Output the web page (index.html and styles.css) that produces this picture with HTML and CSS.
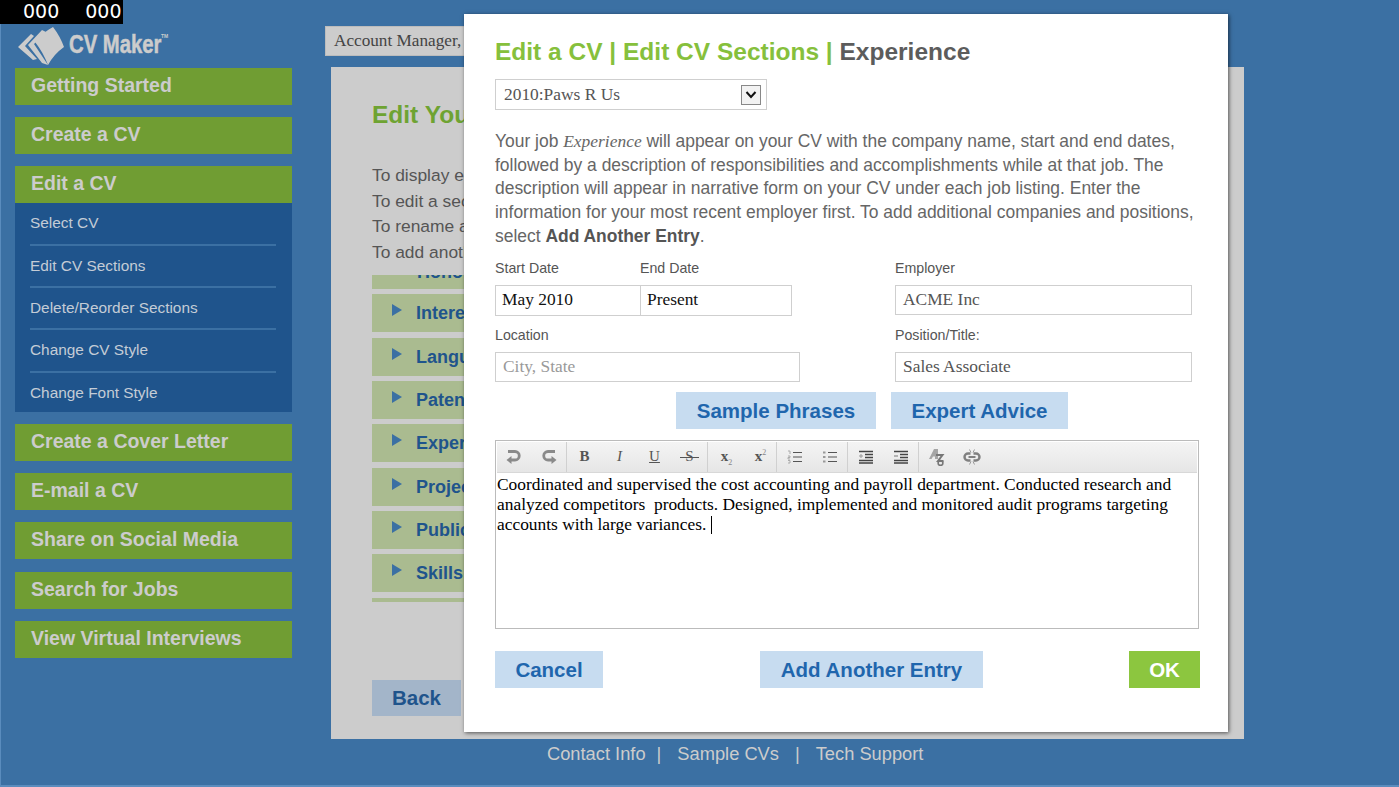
FILE: index.html
```html
<!DOCTYPE html>
<html lang="en">
<head>
  <meta charset="UTF-8">
  <title>CV Maker - Edit a CV</title>
  <link rel="stylesheet" href="styles.css">
</head>
<body>
  <div class="timer"><span>000</span><span>000</span></div>

  <div class="page">
    <div class="sidebar">
      <div class="logo">
        <svg class="logo-mark" width="52" height="40" viewBox="0 0 52 40">
          <path d="M14 8 L1 21 L16 34 L20 33 L8 20 L17 10 Z" fill="#cccccc"/>
          <path d="M25 4 L11 19 L25 37 L31 39 L17 18 L29 6 Z" fill="#cccccc"/>
          <path d="M36 1 Q25 7 18 16 Q26 26 31 39 Q37 28 47 21 Q43 10 36 1 Z" fill="#cccccc"/>
        </svg>
        <span class="logo-text">CV Maker</span>
        <span class="logo-tm">TM</span>
      </div>
      <a class="nav-item">Getting Started</a>
      <a class="nav-item">Create a CV</a>
      <div class="nav-group">
        <a class="nav-item">Edit a CV</a>
        <div class="subnav">
          <a class="subnav-item">Select CV</a>
          <a class="subnav-item">Edit CV Sections</a>
          <a class="subnav-item">Delete/Reorder Sections</a>
          <a class="subnav-item">Change CV Style</a>
          <a class="subnav-item">Change Font Style</a>
        </div>
      </div>
      <a class="nav-item">Create a Cover Letter</a>
      <a class="nav-item">E-mail a CV</a>
      <a class="nav-item">Share on Social Media</a>
      <a class="nav-item">Search for Jobs</a>
      <a class="nav-item">View Virtual Interviews</a>
    </div>

    <div class="main">
      <div class="account-tab">Account Manager, Sign Out</div>
      <div class="panel">
        <h1>Edit Your CV Sections</h1>
        <div class="intro">
          <p>To display each section, select the arrow.</p>
          <p>To edit a section, select its title.</p>
          <p>To rename a section, select Rename.</p>
          <p>To add another section, select Add.</p>
        </div>
        <div class="section-list">
          <div class="section-scroll">
            <div class="section-row section-row-partial">Honors</div>
            <div class="section-row"><span class="arrow"></span>Interests</div>
            <div class="section-row"><span class="arrow"></span>Languages</div>
            <div class="section-row"><span class="arrow"></span>Patents</div>
            <div class="section-row"><span class="arrow"></span>Experience</div>
            <div class="section-row"><span class="arrow"></span>Projects</div>
            <div class="section-row"><span class="arrow"></span>Publications</div>
            <div class="section-row"><span class="arrow"></span>Skills</div>
            <div class="section-row"></div>
          </div>
        </div>
        <a class="back-btn">Back</a>
      </div>
      <div class="footer">
        <a>Contact Info</a><span class="sep">|</span><a>Sample CVs</a><span class="sep sep-wide">|</span><a>Tech Support</a>
      </div>
    </div>
  </div>

  <div class="modal">
    <h2><span class="crumb">Edit a CV | Edit CV Sections | </span>Experience</h2>

    <div class="entry-select">
      <span>2010:Paws R Us</span>
      <span class="select-arrow">
        <svg width="12" height="8" viewBox="0 0 12 8"><path d="M1.5 1 L6 6 L10.5 1" fill="none" stroke="#111" stroke-width="2"/></svg>
      </span>
    </div>

    <p class="help">
      Your job <em>Experience</em> will appear on your CV with the company name, start and end dates,<br>
      followed by a description of responsibilities and accomplishments while at that job. The<br>
      description will appear in narrative form on your CV under each job listing. Enter the<br>
      information for your most recent employer first. To add additional companies and positions,<br>
      select <b>Add Another Entry</b>.
    </p>

    <div class="fields">
      <div class="field-left">
        <div class="date-labels"><label>Start Date</label><label>End Date</label></div>
        <div class="date-box">
          <div class="date-start">May 2010</div>
          <div class="date-end">Present</div>
        </div>
      </div>
      <div class="field-right">
        <label>Employer</label>
        <div class="text-box">ACME Inc</div>
      </div>
      <div class="field-left">
        <label>Location</label>
        <div class="text-box text-box-location placeholder">City, State</div>
      </div>
      <div class="field-right">
        <label>Position/Title:</label>
        <div class="text-box">Sales Associate</div>
      </div>
    </div>

    <div class="helper-btns">
      <a class="btn btn-phrases">Sample Phrases</a>
      <a class="btn btn-advice">Expert Advice</a>
    </div>

    <div class="editor">
      <div class="toolbar">
        <div class="tool-group">
          <span class="tool tool-hist"><svg width="18" height="16" viewBox="0 0 18 16"><path d="M3 2.5 H10 A4.2 4.2 0 0 1 10 11 H5" fill="none" stroke="#8a8a8a" stroke-width="2.8"/><path d="M6.5 7 L1.5 11 L6.5 15 Z" fill="#8a8a8a"/></svg></span>
          <span class="tool tool-hist"><svg width="18" height="16" viewBox="0 0 18 16"><path d="M15 2.5 H8 A4.2 4.2 0 0 0 8 11 H13" fill="none" stroke="#8a8a8a" stroke-width="2.8"/><path d="M11.5 7 L16.5 11 L11.5 15 Z" fill="#8a8a8a"/></svg></span>
        </div>
        <div class="tool-group">
          <span class="tool tool-b">B</span>
          <span class="tool tool-i">I</span>
          <span class="tool tool-u">U</span>
          <span class="tool"><span class="tool-s">S</span></span>
        </div>
        <div class="tool-group">
          <span class="tool tool-x"><span>x<sub>2</sub></span></span>
          <span class="tool tool-x"><span>x<sup>2</sup></span></span>
        </div>
        <div class="tool-group">
          <span class="tool"><svg width="16" height="14" viewBox="0 0 16 14"><path d="M6 2.5 H15 M6 7 H15 M6 11.5 H15" stroke="#555" stroke-width="1.2"/><path d="M1 1 H3 V4 M1 6 H3 V7.5 H1 V9 H3 M1 10.5 H3 V13 H1" fill="none" stroke="#aaa"/></svg></span>
          <span class="tool"><svg width="16" height="14" viewBox="0 0 16 14"><path d="M6 2.5 H15 M6 7 H15 M6 11.5 H15" stroke="#555" stroke-width="1.2"/><path d="M1 1.5 H3.5 V3.5 H1 Z M1 6 H3.5 V8 H1 Z M1 10.5 H3.5 V12.5 H1 Z" fill="#999"/></svg></span>
        </div>
        <div class="tool-group">
          <span class="tool"><svg width="16" height="14" viewBox="0 0 16 14"><path d="M1 1.5 H15 M7 4.5 H15 M7 7.5 H15 M1 10.5 H15 M1 13 H15" stroke="#444" stroke-width="1.4"/><path d="M1 6 H5 M3 4 V8" stroke="#999"/></svg></span>
          <span class="tool"><svg width="16" height="14" viewBox="0 0 16 14"><path d="M1 1.5 H15 M7 4.5 H15 M7 7.5 H15 M1 10.5 H15 M1 13 H15" stroke="#444" stroke-width="1.4"/><path d="M1 6 H5" stroke="#999" stroke-width="1.4"/></svg></span>
        </div>
        <div class="tool-group tool-group-last">
          <span class="tool"><svg width="18" height="18" viewBox="0 0 18 18"><path d="M1 11 L6 1 H10 V11 H7 V8.5 H5 L3.5 11 Z" fill="#a5a5a5"/><path d="M8 7 H14.5 L10 13 H15.5" fill="none" stroke="#777" stroke-width="2"/><circle cx="12.5" cy="15" r="2.4" fill="none" stroke="#777" stroke-width="1.6"/></svg></span>
          <span class="tool"><svg width="18" height="16" viewBox="0 0 18 16"><path d="M7.5 4.5 H5 A3.5 3.5 0 0 0 5 11.5 H7.5 M10.5 4.5 H13 A3.5 3.5 0 0 1 13 11.5 H10.5" fill="none" stroke="#808080" stroke-width="2.4"/><path d="M5.5 8 H12.5" stroke="#808080" stroke-width="2"/><path d="M6.5 0.5 L8 3.5 M11.5 0.5 L10 3.5 M6.5 15.5 L8 12.5 M11.5 15.5 L10 12.5" stroke="#999"/></svg></span>
        </div>
      </div>
      <div class="editor-text">Coordinated and supervised the cost accounting and payroll department. Conducted research and analyzed competitors&nbsp; products. Designed, implemented and monitored audit programs targeting accounts with large variances. <span class="caret"></span></div>
    </div>

    <div class="modal-actions">
      <a class="btn btn-cancel">Cancel</a>
      <a class="btn btn-add">Add Another Entry</a>
      <a class="btn btn-ok">OK</a>
    </div>
  </div>
</body>
</html>
```

FILE: styles.css
```css
html, body {
  margin: 0;
  padding: 0;
  height: 787px;
  overflow: hidden;
}

body {
  font-family: "Liberation Sans", Arial, sans-serif;
  background-color: #3b70a3;
  box-shadow: inset 1px -2px 0 #5a8cbd;
  position: relative;
}

p, h1, h2 {
  margin: 0;
}

.timer {
  position: absolute;
  top: 0;
  left: 0;
  width: 123px;
  height: 24px;
  background-color: #000;
  color: #fff;
  font-family: "DejaVu Sans", sans-serif;
  font-size: 19px;
  line-height: 23px;
  box-sizing: border-box;
  padding-left: 23px;
  display: flex;
  gap: 26px;
}

.page {
  display: flex;
}

/* left menu */
.sidebar {
  width: 277px;
  margin-left: 15px;
  padding-top: 26px;
  flex-shrink: 0;
  display: flex;
  flex-direction: column;
  gap: 12.15px;
}

.logo {
  display: flex;
  height: 42px;
  margin-bottom: -12.15px;
  padding-left: 2px;
  position: relative;
}

.logo-mark {
  flex-shrink: 0;
}

.logo-text {
  color: #cccccc;
  font-size: 26px;
  font-weight: bold;
  line-height: 37px;
  -webkit-text-stroke: 0.5px #cccccc;
  transform: scaleX(0.78);
  transform-origin: left center;
  white-space: nowrap;
}

.logo-tm {
  position: absolute;
  left: 146px;
  top: 7px;
  color: #cccccc;
  font-size: 5px;
  font-weight: bold;
}

.nav-item {
  display: block;
  height: 37px;
  line-height: 35px;
  background-color: #709d33;
  color: #cccccc;
  font-size: 19.5px;
  font-weight: bold;
  padding-left: 16px;
}

.subnav {
  background-color: #1f548c;
  height: 208.7px;
  box-sizing: border-box;
  padding: 0 15px 0 16px;
}

.subnav-item {
  display: block;
  height: 42.4px;
  box-sizing: border-box;
  line-height: 40px;
  color: #c4ccd6;
  font-size: 15.4px;
  border-bottom: 2px solid #3b70a3;
  margin-left: -1px;
  margin-right: 1px;
}

.subnav-item:last-child {
  border-bottom: none;
}

/* page behind the dialog */
.main {
  margin-left: 33px;
  padding-top: 26px;
  flex-grow: 1;
}

.account-tab {
  width: 300px;
  height: 30px;
  box-sizing: border-box;
  background-color: #cccccc;
  border: 1px solid #bcbcbc;
  font-family: "Liberation Serif", serif;
  font-size: 17.2px;
  line-height: 28px;
  color: #444;
  padding-left: 8px;
  white-space: nowrap;
}

.panel {
  margin: 11px 155px 0 6px;
  height: 672px;
  box-sizing: border-box;
  background-color: #cccccc;
  padding: 33px 0 0 41px;
  display: flex;
  flex-direction: column;
}

.panel h1 {
  color: #6ea332;
  font-size: 24.5px;
  line-height: 29px;
  white-space: nowrap;
}

.intro {
  margin-top: 34px;
  color: #555;
  font-size: 17.4px;
  line-height: 25.5px;
  white-space: nowrap;
}

.section-list {
  margin-top: 10px;
  width: 800px;
  height: 327px;
  overflow: hidden;
}

.section-scroll {
  margin-top: -24px;
}

.section-row {
  height: 38px;
  margin-bottom: 5.35px;
  background-color: #aabb90;
  color: #1f548c;
  font-size: 18px;
  font-weight: bold;
  line-height: 38px;
  padding-left: 20px;
  display: flex;
  white-space: nowrap;
}

.section-row-partial {
  padding-left: 45px;
  line-height: 43px;
}

.arrow {
  width: 0;
  height: 0;
  border-left: 10px solid #3b70a3;
  border-top: 6px solid transparent;
  border-bottom: 6px solid transparent;
  margin: 10px 14px 0 0;
}

.back-btn {
  margin-top: 78px;
  width: 89px;
  height: 36px;
  background-color: #a3b5c9;
  color: #1f548c;
  font-size: 20.5px;
  font-weight: bold;
  line-height: 36px;
  text-align: center;
}

.footer {
  margin-left: 222px;
  padding-top: 4px;
  color: #cccccc;
  font-size: 18.3px;
  line-height: 22px;
  white-space: nowrap;
}

.sep {
  margin: 0 16px 0 11px;
}

.sep-wide {
  margin: 0 16px;
}

/* dialog */
.modal {
  position: absolute;
  left: 464px;
  top: 14px;
  width: 764px;
  height: 718px;
  box-sizing: border-box;
  background-color: #fff;
  box-shadow: 1px 1px 4px rgba(0, 0, 0, 0.6);
  padding: 23px 28px 0 31px;
}

.modal h2 {
  font-size: 24.5px;
  line-height: 29px;
  color: #5c5c5c;
  white-space: nowrap;
}

.crumb {
  color: #86c03c;
}

.entry-select {
  margin-top: 13px;
  width: 272px;
  height: 31px;
  box-sizing: border-box;
  border: 1px solid #cfcfcf;
  display: flex;
  align-items: center;
  justify-content: space-between;
  padding: 0 5px 0 8px;
  font-family: "Liberation Serif", serif;
  font-size: 17.4px;
  color: #555;
}

.select-arrow {
  width: 20px;
  height: 20px;
  box-sizing: border-box;
  border: 1px solid #888;
  background-color: #f2f2f2;
  display: flex;
  align-items: center;
  justify-content: center;
}

.help {
  margin-top: 20px;
  color: #666;
  font-size: 17.45px;
  line-height: 23.7px;
  white-space: nowrap;
}

.help em {
  font-family: "Liberation Serif", serif;
}

.help b {
  color: #555;
}

.fields {
  margin-top: 7px;
  display: grid;
  grid-template-columns: 400px 297px;
  row-gap: 7px;
}

.fields label {
  display: block;
  height: 24px;
  margin-bottom: 5px;
  color: #555;
  font-size: 14.2px;
  line-height: 24px;
}

.date-labels {
  display: flex;
}

.date-labels label {
  width: 145px;
}

.date-box {
  display: flex;
  width: 297px;
  height: 31px;
  box-sizing: border-box;
  border: 1px solid #cfcfcf;
  font-family: "Liberation Serif", serif;
  font-size: 17.4px;
  line-height: 27px;
  color: #111;
}

.date-start {
  width: 145px;
  box-sizing: border-box;
  padding-left: 6px;
  border-right: 1px solid #cfcfcf;
}

.date-end {
  padding-left: 6px;
}

.text-box {
  height: 30px;
  box-sizing: border-box;
  border: 1px solid #cfcfcf;
  padding-left: 7px;
  font-family: "Liberation Serif", serif;
  font-size: 17.4px;
  line-height: 27px;
  color: #555;
}

.text-box-location {
  width: 305px;
}

.placeholder {
  color: #999;
}

.btn {
  display: block;
  height: 37px;
  background-color: #c7dcf0;
  color: #1f66ad;
  font-size: 20.5px;
  font-weight: bold;
  line-height: 37px;
  text-align: center;
}

.helper-btns {
  margin-top: 10px;
  margin-left: 181px;
  display: flex;
  gap: 15px;
}

.btn-phrases {
  width: 200px;
}

.btn-advice {
  width: 177px;
}

.editor {
  margin-top: 11px;
  width: 704px;
  height: 189px;
  box-sizing: border-box;
  border: 1px solid #bbb;
  padding: 1px;
}

.toolbar {
  display: flex;
  height: 31px;
  background: linear-gradient(#f4f4f4, #e6e6e6);
  border-bottom: 1px solid #d8d8d8;
  box-sizing: border-box;
}

.tool-group {
  display: flex;
  border-right: 1px solid #d0d0d0;
}

.tool-group-last {
  border-right: none;
}

.tool {
  width: 35px;
  display: flex;
  align-items: center;
  justify-content: center;
  font-family: "Liberation Serif", serif;
  font-size: 15px;
  color: #555;
}

.tool-hist {
  width: 34.5px;
}

.tool-b {
  font-weight: bold;
}

.tool-i {
  font-style: italic;
}

.tool-u {
  text-decoration: underline;
}

.tool-s {
  position: relative;
}

.tool-s::after {
  content: "";
  position: absolute;
  left: -5px;
  right: -5px;
  top: 9px;
  height: 1px;
  background-color: #555;
}

.tool-x {
  width: 34px;
  box-sizing: border-box;
  padding-left: 3px;
  font-weight: bold;
}

.tool-x sub,
.tool-x sup {
  font-size: 8px;
  font-weight: normal;
  line-height: 0;
  color: #888;
}

.editor-text {
  padding-top: 1px;
  font-family: "Liberation Serif", serif;
  font-size: 17.4px;
  line-height: 20px;
  color: #000;
}

.caret {
  display: inline-block;
  width: 1px;
  height: 18px;
  background-color: #000;
  vertical-align: -4px;
}

.modal-actions {
  margin-top: 22px;
  width: 705px;
  display: flex;
  justify-content: space-between;
}

.btn-cancel {
  width: 108px;
}

.btn-add {
  width: 223px;
  margin-left: 11px;
}

.btn-ok {
  width: 71px;
  background-color: #8cc63f;
  color: #fff;
}
```
